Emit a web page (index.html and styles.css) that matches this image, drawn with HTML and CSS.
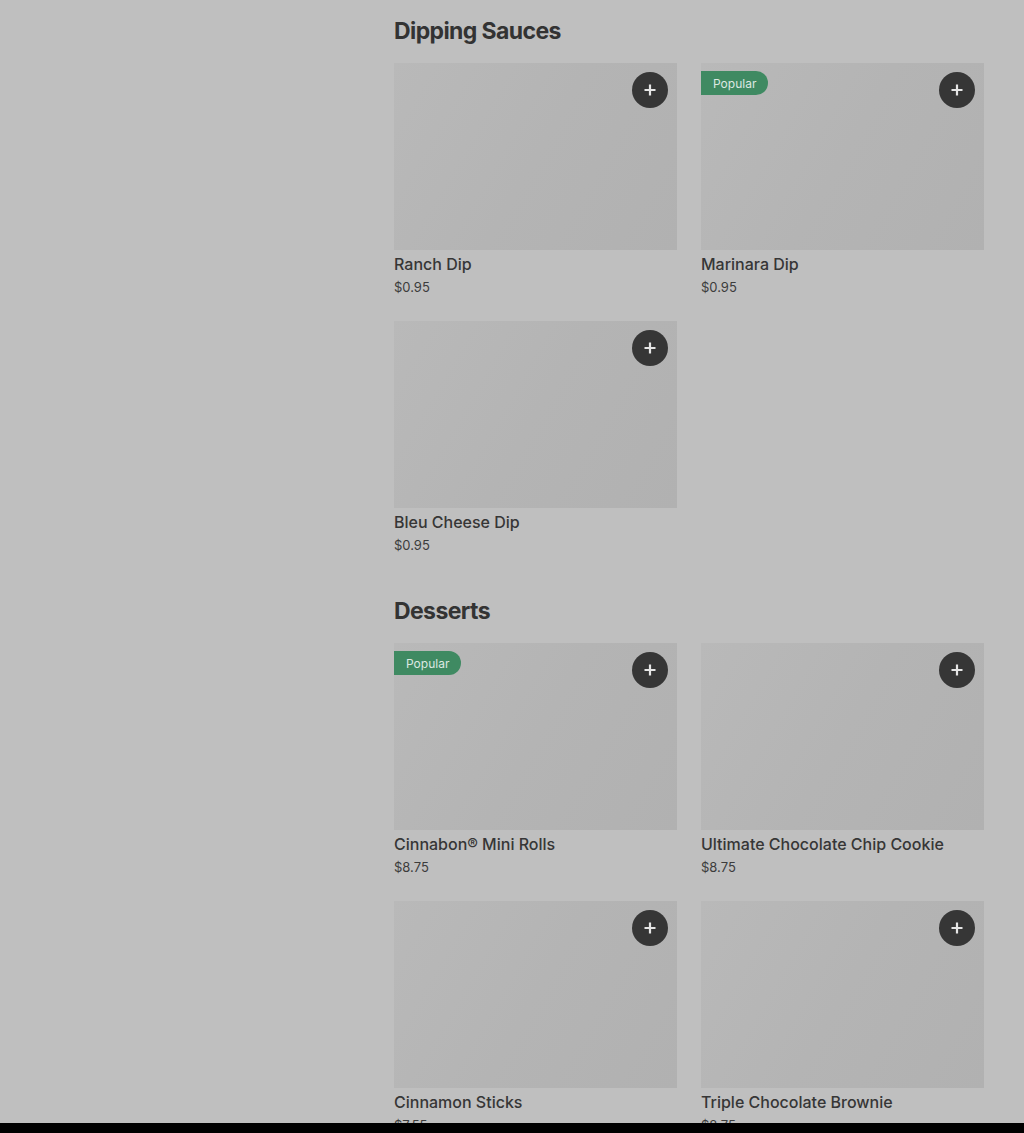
FILE: index.html
```html
<!DOCTYPE html>
<html lang="en">
<head>
<meta charset="utf-8">
<title>Menu</title>
<link rel="stylesheet" href="styles.css">
</head>
<body>
<div class="page">
  <div class="layout">
    <aside class="sidebar"></aside>
    <main class="menu">
      <section class="category">
        <h2 class="category-title">Dipping Sauces</h2>
        <div class="grid">
          <article class="item">
            <div class="thumb">
              <button class="add" aria-label="Add"><svg viewBox="0 0 16 16" width="16" height="16"><path d="M8 2.5v11M2.5 8h11" stroke="currentColor" stroke-width="2.2" fill="none"/></svg></button>
            </div>
            <h3 class="item-name">Ranch Dip</h3>
            <p class="item-price">$0.95</p>
          </article>
          <article class="item">
            <div class="thumb">
              <span class="badge">Popular</span>
              <button class="add" aria-label="Add"><svg viewBox="0 0 16 16" width="16" height="16"><path d="M8 2.5v11M2.5 8h11" stroke="currentColor" stroke-width="2.2" fill="none"/></svg></button>
            </div>
            <h3 class="item-name">Marinara Dip</h3>
            <p class="item-price">$0.95</p>
          </article>
          <article class="item">
            <div class="thumb">
              <button class="add" aria-label="Add"><svg viewBox="0 0 16 16" width="16" height="16"><path d="M8 2.5v11M2.5 8h11" stroke="currentColor" stroke-width="2.2" fill="none"/></svg></button>
            </div>
            <h3 class="item-name">Bleu Cheese Dip</h3>
            <p class="item-price">$0.95</p>
          </article>
        </div>
      </section>
      <section class="category">
        <h2 class="category-title">Desserts</h2>
        <div class="grid">
          <article class="item">
            <div class="thumb">
              <span class="badge">Popular</span>
              <button class="add" aria-label="Add"><svg viewBox="0 0 16 16" width="16" height="16"><path d="M8 2.5v11M2.5 8h11" stroke="currentColor" stroke-width="2.2" fill="none"/></svg></button>
            </div>
            <h3 class="item-name">Cinnabon® Mini Rolls</h3>
            <p class="item-price">$8.75</p>
          </article>
          <article class="item">
            <div class="thumb">
              <button class="add" aria-label="Add"><svg viewBox="0 0 16 16" width="16" height="16"><path d="M8 2.5v11M2.5 8h11" stroke="currentColor" stroke-width="2.2" fill="none"/></svg></button>
            </div>
            <h3 class="item-name">Ultimate Chocolate Chip Cookie</h3>
            <p class="item-price">$8.75</p>
          </article>
          <article class="item">
            <div class="thumb">
              <button class="add" aria-label="Add"><svg viewBox="0 0 16 16" width="16" height="16"><path d="M8 2.5v11M2.5 8h11" stroke="currentColor" stroke-width="2.2" fill="none"/></svg></button>
            </div>
            <h3 class="item-name">Cinnamon Sticks</h3>
            <p class="item-price">$7.55</p>
          </article>
          <article class="item">
            <div class="thumb">
              <button class="add" aria-label="Add"><svg viewBox="0 0 16 16" width="16" height="16"><path d="M8 2.5v11M2.5 8h11" stroke="currentColor" stroke-width="2.2" fill="none"/></svg></button>
            </div>
            <h3 class="item-name">Triple Chocolate Brownie</h3>
            <p class="item-price">$8.75</p>
          </article>
        </div>
      </section>
    </main>
  </div>
  <div class="bottom-bar"></div>
</div>
</body>
</html>
```

FILE: styles.css
```css
* { box-sizing: border-box; }

html, body {
  margin: 0;
  padding: 0;
  height: 100%;
}

body {
  background: #bfbfbf;
  color: #333333;
  font-family: Inter, "Liberation Sans", sans-serif;
}

.page {
  height: 100vh;
  display: flex;
  flex-direction: column;
}

.layout {
  flex: 1;
  min-height: 0;
  overflow: hidden;
  display: flex;
  gap: 24px;
}

.sidebar {
  width: 370px;
  flex: none;
}

.menu {
  width: 590px;
  flex: none;
  padding-top: 15px;
  display: flex;
  flex-direction: column;
  gap: 40px;
}

.category-title {
  margin: 0 0 16px;
  font-size: 23px;
  line-height: 32px;
  font-weight: 700;
  letter-spacing: -0.6px;
  color: #333333;
}

.grid {
  display: grid;
  grid-template-columns: 283px 283px;
  column-gap: 24px;
  row-gap: 24px;
}

.thumb {
  position: relative;
  height: 187px;
  background: linear-gradient(120deg, #b9b9b9 0%, #b4b4b4 50%, #b1b1b1 100%);
}

.add {
  position: absolute;
  top: 9px;
  right: 9px;
  width: 36px;
  height: 36px;
  border-radius: 50%;
  border: none;
  padding: 0;
  background: #363636;
  color: #e6e6e6;
  display: flex;
  align-items: center;
  justify-content: center;
}

.badge {
  position: absolute;
  top: 8px;
  left: 0;
  height: 24px;
  padding: 0 12px;
  display: flex;
  align-items: center;
  background: #3f8a62;
  color: #dde8e1;
  font-size: 12px;
  border-radius: 0 12px 12px 0;
}

.item-name {
  margin: 4px 0 0;
  font-size: 16px;
  line-height: 20px;
  font-weight: 500;
  color: #363636;
}

.item-price {
  margin: 3px 0 0;
  font-size: 13px;
  line-height: 20px;
  color: #3c3c3c;
}

.bottom-bar {
  height: 10px;
  flex: none;
  background: #000000;
}
```
